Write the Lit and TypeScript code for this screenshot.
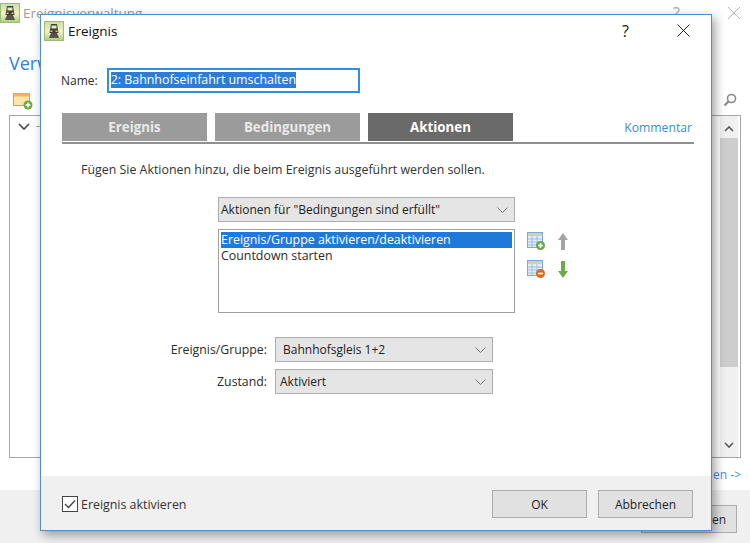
import { LitElement, html, css, svg } from "lit";
import { customElement } from "lit/decorators.js";

const trainIcon = svg`<svg class="appicon" width="20" height="20" viewBox="0 0 20 20">
  <defs><linearGradient id="tg" x1="0" y1="0" x2="0" y2="1"><stop offset="0" stop-color="#c9dfa0"/><stop offset="0.55" stop-color="#f2f0c8"/><stop offset="1" stop-color="#a7cf7c"/></linearGradient></defs>
  <rect x="0.5" y="0.5" width="19" height="19" fill="url(#tg)" stroke="#9dbb72"/>
  <path d="M7 3 L13 3 L14.5 12 L5.5 12Z" fill="#3c3f33"/>
  <rect x="7.5" y="4.5" width="5" height="3" fill="#e4e6c0"/>
  <rect x="6.5" y="9.5" width="2" height="1.5" fill="#e8d060"/><rect x="11.5" y="9.5" width="2" height="1.5" fill="#e8d060"/>
  <path d="M5 17 L7 12 L13 12 L15 17Z" fill="#55524a"/>
</svg>`;

const chevron = svg`<svg class="chev" width="11" height="6" viewBox="0 0 11 6"><path d="M0.5 0.5 L5.5 5.5 L10.5 0.5" fill="none" stroke="#777" stroke-width="1"/></svg>`;

const listIcon = (plus: boolean) => svg`<svg width="19" height="19" viewBox="0 0 19 19">
  <rect x="0.5" y="0.5" width="15" height="15" fill="#e3eefa" stroke="#7ea6d8"/>
  <rect x="1" y="1" width="14" height="3" fill="#c4d8a8"/>
  <path d="M1 7 H15 M1 10 H15 M1 13 H15 M5 4 V15 M10 4 V15" stroke="#9dbde2" stroke-width="1"/>
  <circle cx="13.5" cy="13.5" r="4.5" fill="${plus ? "#66a84a" : "#d9682a"}"/>
  ${plus
    ? svg`<path d="M13.5 11 V16 M11 13.5 H16" stroke="#fff" stroke-width="1.6"/>`
    : svg`<path d="M11 13.5 H16" stroke="#fff" stroke-width="1.6"/>`}
</svg>`;

@customElement("app-root")
export class AppRoot extends LitElement {
  static styles = css`
    :host { display: block; width: 750px; height: 543px; position: relative; overflow: hidden; background: #fff;
      font-family: "Open Sans", "Noto Sans", sans-serif; font-size: 12px; color: #2b2b2b; }
    /* background window */
    .bgwin { width: 750px; height: 543px; display: flex; flex-direction: column; }
    .bgtitle { height: 38px; flex: none; display: flex; align-items: flex-start; padding-top: 3px; box-sizing: border-box; color: #9a9a9a; font-size: 13.5px; gap: 3px; }
    .bgtitle span { line-height: 20px; flex: 1; }
    .bgq { flex: none !important; width: 51px; font-size: 16px; color: #aaa; }
    .bgx { margin: 3px 9px 0 0; }
    .bgh { height: 47px; flex: none; padding-left: 9px; color: #2f7fdd; font-size: 18px; line-height: 50px; }
    .bgtool { height: 30px; flex: none; display: flex; justify-content: space-between; padding: 8px 13px 0 13px; box-sizing: border-box; }
    .bgtree { margin: 0 9px; height: 343px; flex: none; border: 1px solid #a6a6a6; display: flex; justify-content: space-between; box-sizing: border-box; }
    .bgtree .c { padding: 3px 0 0 8px; display: flex; gap: 6px; color: #888; line-height: 14px; align-items: baseline; }
    .bgsb { width: 18px; margin-right: 2px; background: #f0f0f0; display: flex; flex-direction: column; align-items: center; padding: 10px 0 9px; box-sizing: border-box; }
    .thumb { width: 18px; height: 229px; background: #cdcdcd; margin: 6px 0 auto; }
    .bglink { height: 32px; flex: none; display: flex; justify-content: flex-end; padding-right: 9px; align-items: center; color: #3d8fe0; }
    .bgfoot { flex: 1; background: #f0f0f0; display: flex; justify-content: flex-end; padding: 15px 13px 0 0; }
    .bgbtn { width: 96px; height: 28px; background: #e1e1e1; border: 1px solid #adadad; box-sizing: border-box; text-align: right; padding: 5px 10px; margin-left: 10px; }

    /* dialog */
    .dialog { position: absolute; left: 40px; top: 14px; width: 672px; height: 517px; box-sizing: border-box; background: #fff;
      border: 1px solid #4a90d0; box-shadow: 3px 4px 10px rgba(0,0,0,0.38); display: flex; flex-direction: column; }
    .title { height: 31px; display: flex; align-items: center; padding-left: 3px; gap: 4px; font-size: 13.5px; color: #111; flex: none; }
    .title .t { flex: 1; }
    .q { width: 51px; font-size: 16px; color: #222; }
    .x { margin-right: 21px; display: block; }
    .body { flex: 1; display: flex; flex-direction: column; padding: 0 17px 0 21px; }
    .name { display: flex; align-items: center; gap: 9px; margin-top: 21px; height: 26px; margin-left: -1px; }
    .nameinput { width: 253px; height: 25px; box-sizing: border-box; border: 2px solid #2f8fe0; padding: 1px 2px; display: flex; align-items: center; }
    .sel { background: #2b7dd8; color: #fff; line-height: 16px; white-space: nowrap; font-size: 12.4px; }
    .tabs { display: flex; gap: 8px; margin-top: 20px; height: 29px; border-bottom: 2px solid #8f8f8f; align-items: flex-start; }
    .tab { width: 145px; height: 28px; background: #9b9b9b; color: #e9e9e9; font-weight: 700; display: flex; align-items: center; justify-content: center; font-size: 13.3px; }
    .tab.active { background: #6a6a6a; color: #fff; }
    .komm { margin-left: auto; color: #3b8ee0; align-self: center; padding-right: 2px; font-size: 12.2px; }
    .intro { margin: 17px 0 0 19px; font-size: 12.4px; line-height: 18px; color: #333; }
    .mid { margin: 18px 0 0 156px; display: flex; flex-direction: column; }
    .combo { background: #e5e5e5; border: 1px solid #adadad; box-sizing: border-box; display: flex; align-items: center; justify-content: space-between; padding: 0 6px 0 2px; height: 25px; color: #222; }
    .combo.w1 { width: 297px; }
    .listrow { display: flex; margin-top: 7px; gap: 12px; }
    .list { width: 297px; height: 84px; box-sizing: border-box; border: 1px solid #a0a0a0; padding: 2px; line-height: 16px; font-size: 12.4px; }
    .item { height: 16px; }
    .item.on { background: #1f79d8; color: #fff; }
    .tools { display: grid; grid-template-columns: 19px 14px; gap: 9px 10px; padding-top: 3px; align-content: start; }
    .form { margin: 24px 0 0 0; display: grid; grid-template-columns: 205px 218px; gap: 7px 8px; align-items: center; }
    .form label { text-align: right; font-size: 12.3px; }
    .form .pad { padding-left: 7px; }
    .form .pad2 { padding-left: 4px; }
    .foot { height: 54px; flex: none; background: #f0f0f0; display: flex; align-items: center; padding: 2px 18px 0 21px; gap: 11px; box-sizing: border-box; }
    .chk { display: flex; align-items: center; gap: 3px; margin-right: auto; font-size: 12.4px; color: #333; }
    .btn { width: 95px; height: 28px; box-sizing: border-box; background: #e1e1e1; border: 1px solid #adadad; display: flex; align-items: center; justify-content: center; color: #222; }
  `;

  render() {
    return html`
      <div class="bgwin">
        <div class="bgtitle">${trainIcon}<span>Ereignisverwaltung</span><span class="bgq">?</span>
          <svg class="bgx" width="14" height="14" viewBox="0 0 14 14"><path d="M1 1 L13 13 M13 1 L1 13" stroke="#b5b5b5"/></svg></div>
        <div class="bgh">Verw</div>
        <div class="bgtool">
          <svg width="20" height="17" viewBox="0 0 20 17"><rect x="0.5" y="0.5" width="16" height="12" fill="#fbe6a8" stroke="#d9a341"/><rect x="0.5" y="0.5" width="16" height="3" fill="#efb850"/><circle cx="15" cy="12" r="4.5" fill="#66a84a"/><path d="M15 9.5 V14.5 M12.5 12 H17.5" stroke="#fff" stroke-width="1.5"/></svg>
          <svg width="14" height="14" viewBox="0 0 14 14"><circle cx="8.5" cy="5.5" r="4" fill="none" stroke="#8a8a8a" stroke-width="1.6"/><path d="M5.5 8.5 L1.5 12.5" stroke="#8a8a8a" stroke-width="2.2"/></svg>
        </div>
        <div class="bgtree">
          <div class="c"><svg width="12" height="7" viewBox="0 0 12 7"><path d="M1 1 L6 6 L11 1" fill="none" stroke="#444" stroke-width="1.6"/></svg><span>-</span></div>
          <div class="bgsb">
            <svg width="10" height="6" viewBox="0 0 10 6"><path d="M1 5 L5 1 L9 5" fill="none" stroke="#555" stroke-width="1.6"/></svg>
            <div class="thumb"></div>
            <svg width="10" height="6" viewBox="0 0 10 6"><path d="M1 1 L5 5 L9 1" fill="none" stroke="#555" stroke-width="1.6"/></svg>
          </div>
        </div>
        <div class="bglink">en -&gt;</div>
        <div class="bgfoot"><div class="bgbtn">Schließen</div></div>
      </div>

      <div class="dialog">
        <div class="title">${trainIcon}<span class="t">Ereignis</span><span class="q">?</span>
          <svg class="x" width="13" height="13" viewBox="0 0 13 13"><path d="M0.5 0.5 L12.5 12.5 M12.5 0.5 L0.5 12.5" stroke="#222"/></svg></div>
        <div class="body">
          <div class="name"><span>Name:</span><div class="nameinput"><span class="sel">2: Bahnhofseinfahrt umschalten</span></div></div>
          <div class="tabs">
            <div class="tab">Ereignis</div>
            <div class="tab">Bedingungen</div>
            <div class="tab active">Aktionen</div>
            <span class="komm">Kommentar</span>
          </div>
          <div class="intro">Fügen Sie Aktionen hinzu, die beim Ereignis ausgeführt werden sollen.</div>
          <div class="mid">
            <div class="combo w1"><span>Aktionen für "Bedingungen sind erfüllt"</span>${chevron}</div>
            <div class="listrow">
              <div class="list">
                <div class="item on">Ereignis/Gruppe aktivieren/deaktivieren</div>
                <div class="item">Countdown starten</div>
              </div>
              <div class="tools">
                ${listIcon(true)}
                <svg width="14" height="19" viewBox="0 0 14 19"><path d="M7 1 L12 8 H9 V18 H5 V8 H2Z" fill="#a3a3a3"/></svg>
                ${listIcon(false)}
                <svg width="14" height="19" viewBox="0 0 14 19"><path d="M7 18 L12 11 H9 V1 H5 V11 H2Z" fill="#6cab4a"/></svg>
              </div>
            </div>
          </div>
          <div class="form">
            <label>Ereignis/Gruppe:</label>
            <div class="combo pad"><span>Bahnhofsgleis 1+2</span>${chevron}</div>
            <label>Zustand:</label>
            <div class="combo pad2"><span>Aktiviert</span>${chevron}</div>
          </div>
        </div>
        <div class="foot">
          <div class="chk">
            <svg width="16" height="16" viewBox="0 0 16 16"><rect x="0.5" y="0.5" width="15" height="15" fill="#fff" stroke="#444"/><path d="M3 8 L6.5 11.5 L13 4.5" fill="none" stroke="#444" stroke-width="1.4"/></svg>
            <span>Ereignis aktivieren</span>
          </div>
          <div class="btn">OK</div>
          <div class="btn">Abbrechen</div>
        </div>
      </div>
    `;
  }
}
